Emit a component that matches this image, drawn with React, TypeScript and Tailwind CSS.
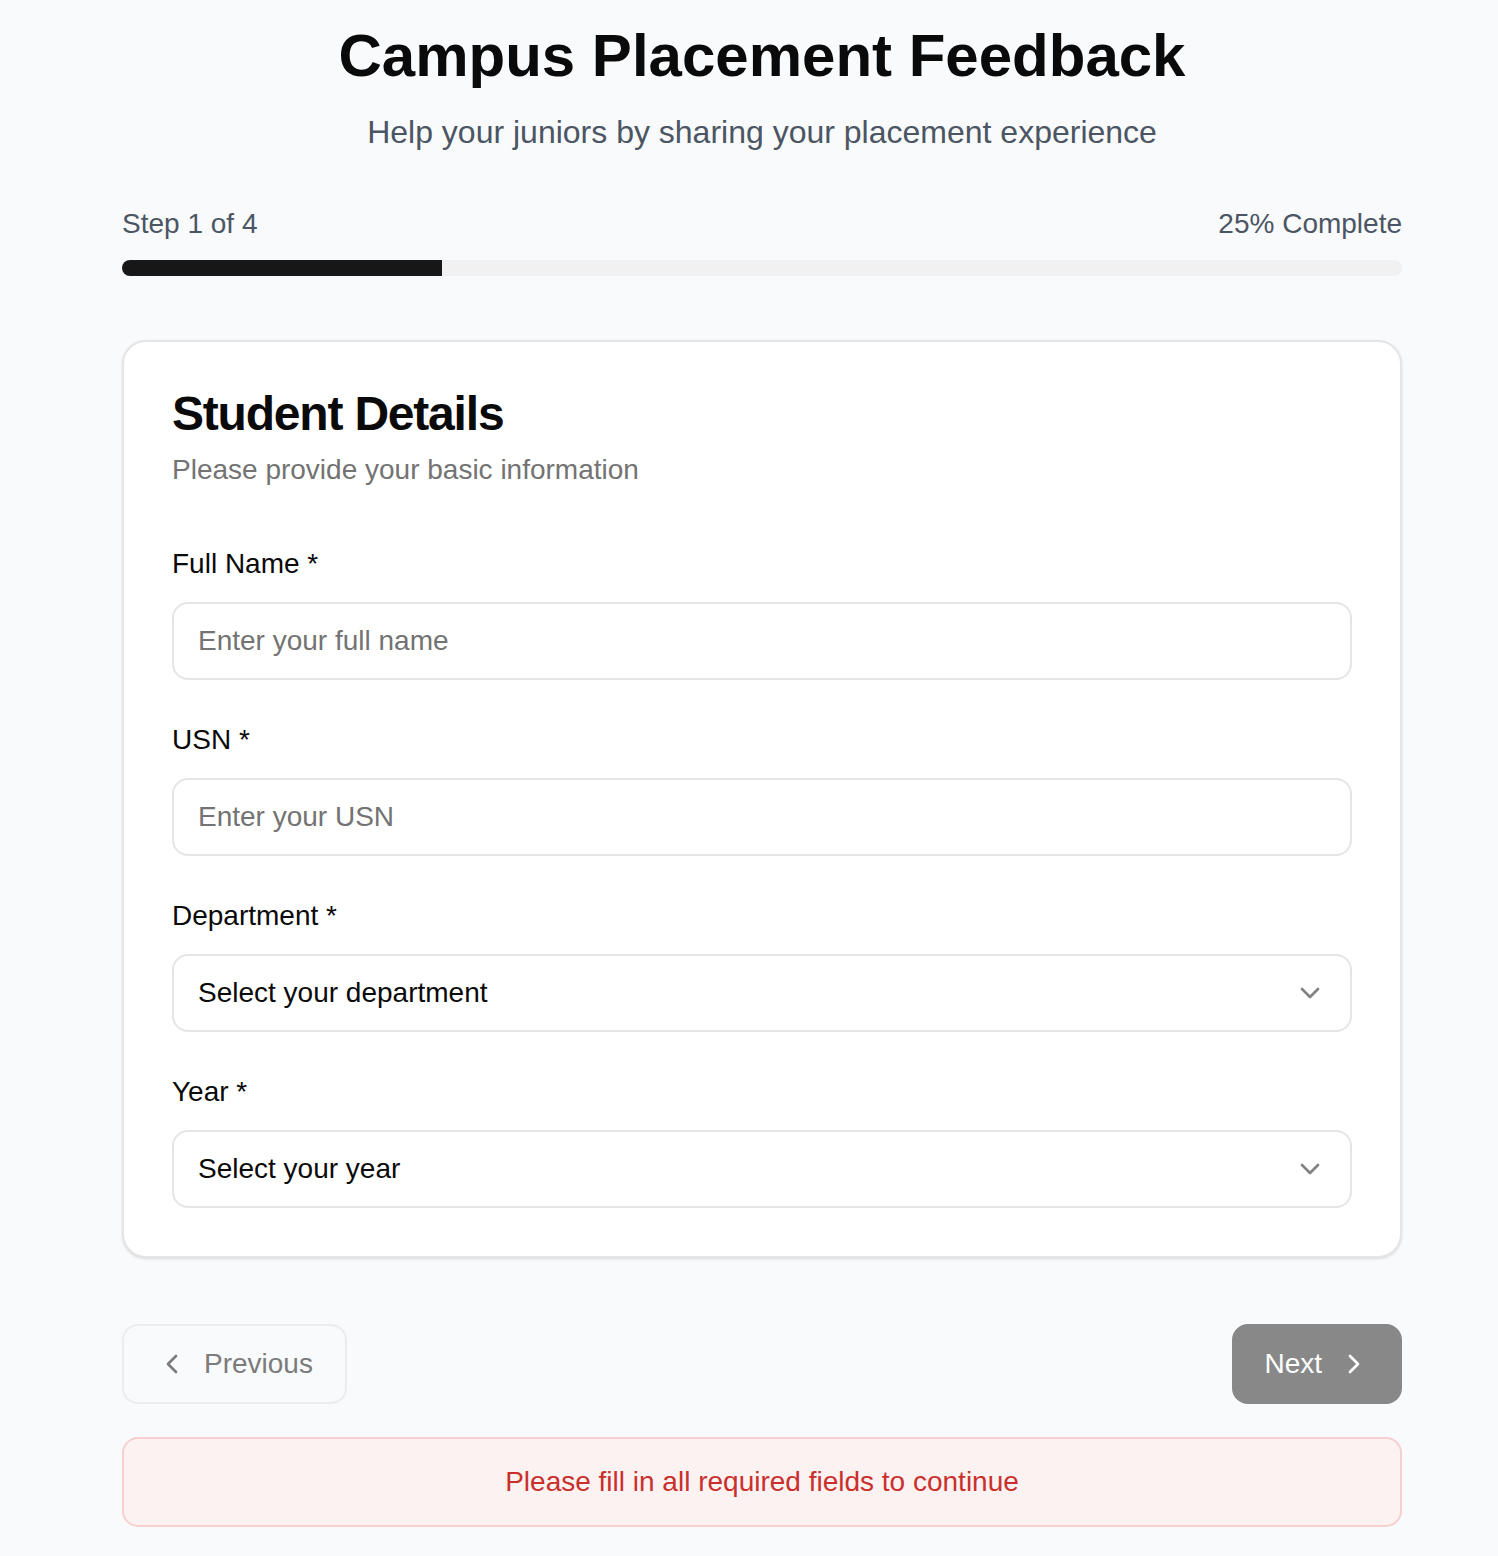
import { ChevronDown, ChevronLeft, ChevronRight } from 'lucide-react';

const FIELDS = [
  { label: 'Full Name *', kind: 'input', text: 'Enter your full name' },
  { label: 'USN *', kind: 'input', text: 'Enter your USN' },
  { label: 'Department *', kind: 'select', text: 'Select your department' },
  { label: 'Year *', kind: 'select', text: 'Select your year' },
];

export default function App() {
  const step = 1;
  const total = 4;
  const pct = (step / total) * 100;

  return (
    <div className="min-h-screen bg-[#f9fafb] pl-[122px] pt-[20px] pb-[29px] font-['Liberation_Sans',Arial,sans-serif] text-[#0a0a0a]">
      <div className="w-[1280px]">
        {/* Header */}
        <div className="text-center">
          <h1 className="text-[60px] leading-[72px] font-bold text-[#0a0a0a]">Campus Placement Feedback</h1>
          <p className="mt-[16px] text-[32px] leading-[48px] text-[#4b5563]">
            Help your juniors by sharing your placement experience
          </p>
        </div>

        {/* Progress */}
        <div className="mt-[48px] flex items-center justify-between text-[28px] leading-[40px] text-[#4b5563]">
          <span>Step {step} of {total}</span>
          <span>{pct}% Complete</span>
        </div>
        <div className="mt-[16px] h-4 w-full overflow-hidden rounded-full bg-[#f1f1f1]">
          <div className="h-full bg-[#171717]" style={{ width: `${pct}%` }} />
        </div>

        {/* Card */}
        <div className="mt-[64px] rounded-[24px] border-2 border-[#e5e5e5] bg-white p-[48px] shadow-sm">
          <h2 className="text-[48px] leading-[48px] font-bold tracking-tight">Student Details</h2>
          <p className="mt-[12px] text-[28px] leading-[40px] text-[#737373]">Please provide your basic information</p>

          <div className="mt-[60px] flex flex-col gap-[46px]">
            {FIELDS.map(f => (
              <div key={f.label}>
                <label className="block text-[28px] leading-[28px] font-medium">{f.label}</label>
                {f.kind === 'input' ? (
                  <input
                    type="text"
                    placeholder={f.text}
                    className="mt-[24px] block h-[78px] w-full rounded-[16px] border-2 border-[#e5e5e5] bg-white px-[24px] text-[28px] outline-none placeholder:text-[#737373]"
                  />
                ) : (
                  <button
                    type="button"
                    className="mt-[24px] flex h-[78px] w-full items-center justify-between rounded-[16px] border-2 border-[#e5e5e5] bg-white px-[24px] text-left text-[28px]"
                  >
                    <span>{f.text}</span>
                    <ChevronDown className="h-8 w-8 text-[#0a0a0a] opacity-50" strokeWidth={2} />
                  </button>
                )}
              </div>
            ))}
          </div>
        </div>

        {/* Nav */}
        <div className="mt-[66px] flex items-center justify-between">
          <button
            type="button"
            disabled
            className="flex h-[80px] items-center gap-[16px] rounded-[16px] border-2 border-[#ececec] px-[32px] text-[28px] text-[#7b7b7b]"
          >
            <ChevronLeft className="h-8 w-8" strokeWidth={2} />
            Previous
          </button>
          <button
            type="button"
            className="flex h-[80px] items-center gap-[16px] rounded-[16px] bg-[#888888] px-[32px] text-[28px] text-white"
          >
            Next
            <ChevronRight className="h-8 w-8" strokeWidth={2} />
          </button>
        </div>

        {/* Error */}
        <div className="mt-[33px] rounded-[16px] border-2 border-[#f7cfcf] bg-[#fcf2f2] py-[23px] text-center text-[28px] leading-[40px] text-[#c9302c]">
          Please fill in all required fields to continue
        </div>
      </div>
    </div>
  );
}
